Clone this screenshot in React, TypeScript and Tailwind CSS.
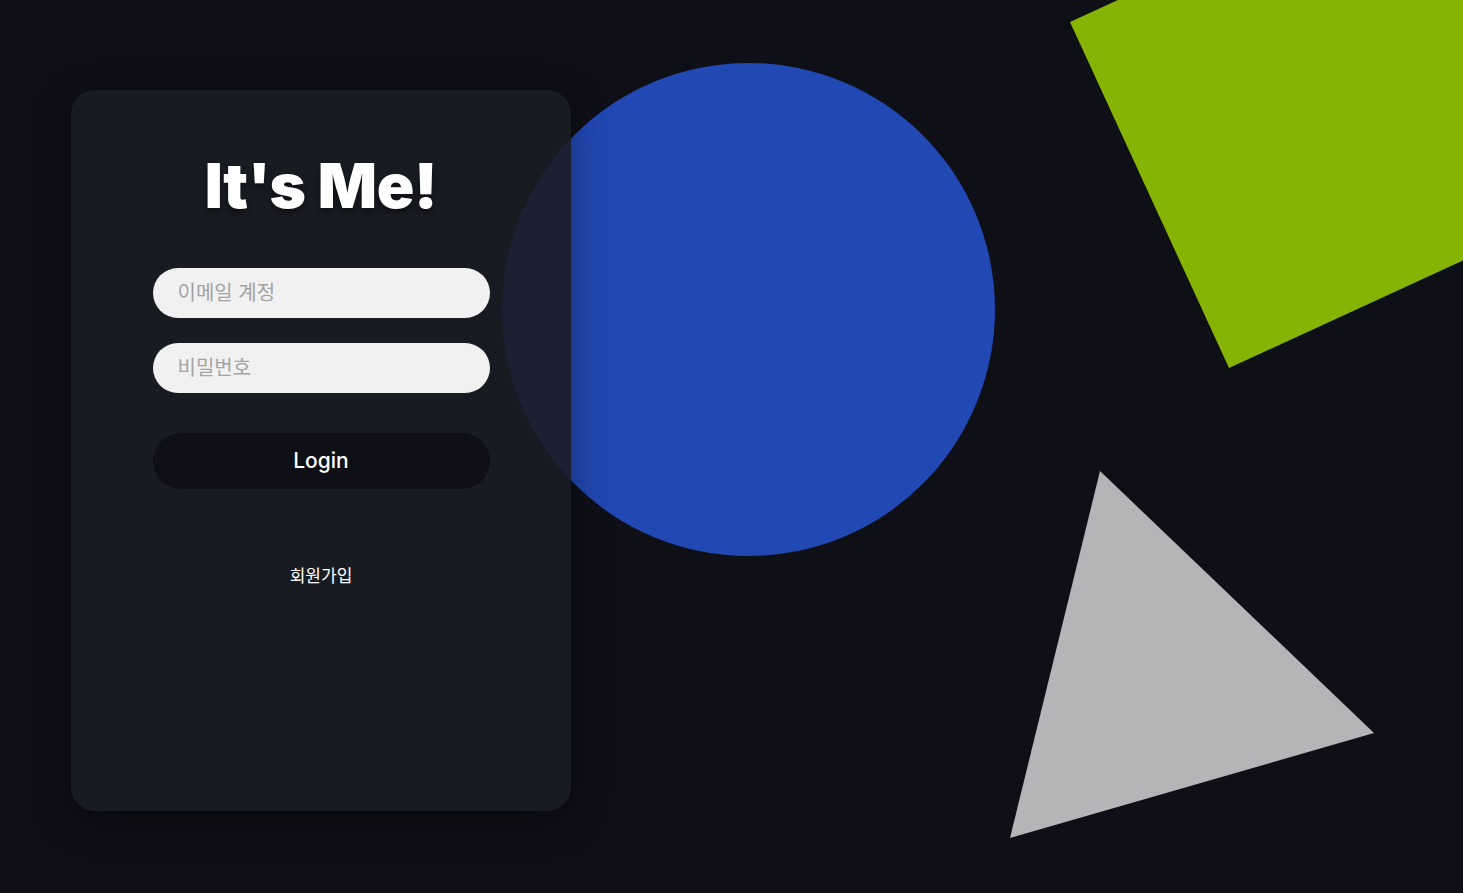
export default function App() {
  return (
    <main className="relative min-h-screen h-[893px] w-full overflow-hidden bg-[#0e0f17] font-['Inter','Noto_Sans_CJK_KR',sans-serif]">
      <svg
        className="absolute inset-0 h-full w-full"
        width="1463"
        height="893"
        viewBox="0 0 1463 893"
      >
        <circle cx="748.5" cy="309.5" r="246.5" fill="#2148b3" />
        <polygon points="1070,22 1416,-137 1575,209 1229,368" fill="#86b404" />
        <polygon points="1100,471 1374,733 1010,838" fill="#b4b5b6" />
      </svg>

      <div className="relative pl-[71px] pt-[90px]">
        <section className="flex h-[721px] w-[500px] flex-col items-center rounded-[24px] bg-[#1b1d25]/90 pt-[65px] shadow-[0_10px_40px_rgba(0,0,0,0.35)]">
          <h1 className="text-[62px] font-black leading-none tracking-[-0.005em] text-white [text-shadow:0_4px_6px_rgba(0,0,0,0.45)]">
            It's Me!
          </h1>

          <form className="mt-[51px] flex w-[337px] flex-col">
            <input
              type="email"
              placeholder="이메일 계정"
              className="h-[50px] w-full rounded-full bg-[#f1f1f1] px-[25px] text-[20px] text-[#333] outline-none placeholder:text-[#a3a3a3]"
            />
            <input
              type="password"
              placeholder="비밀번호"
              className="mt-[25px] h-[50px] w-full rounded-full bg-[#f1f1f1] px-[25px] text-[20px] text-[#333] outline-none placeholder:text-[#a3a3a3]"
            />
            <button
              type="button"
              className="mt-[40px] h-[56px] w-full rounded-full bg-[#0e0f17] text-[21px] font-medium text-white"
            >
              Login
            </button>
          </form>

          <a className="mt-[75px] text-[17px] leading-6 text-white">회원가입</a>
        </section>
      </div>
    </main>
  );
}
